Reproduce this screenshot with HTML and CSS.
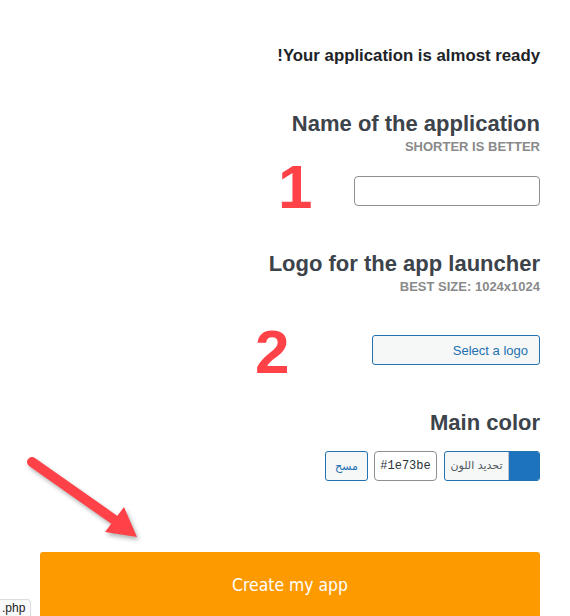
FILE: index.html
```html
<!DOCTYPE html>
<html lang="ar" dir="rtl">
<head>
    <meta charset="UTF-8">
    <meta name="viewport" content="width=device-width, initial-scale=1.0">
    <title>Create my app</title>
    <link rel="stylesheet" href="styles.css">
</head>
<body>
    <div class="wrap">
        <p class="intro" dir="rtl">Your application is almost ready!</p>

        <div class="field field-name">
            <h2 class="field-title">Name of the application</h2>
            <div class="field-hint">SHORTER IS BETTER</div>
            <input type="text" class="text-input" dir="ltr">
            <span class="step step-1">1</span>
        </div>

        <div class="field field-logo">
            <h2 class="field-title">Logo for the app launcher</h2>
            <div class="field-hint">BEST SIZE: 1024x1024</div>
            <button class="wp-button logo-btn" dir="ltr">Select a logo</button>
            <span class="step step-2">2</span>
        </div>

        <div class="field field-color">
            <h2 class="field-title">Main color</h2>
            <div class="color-row">
                <button class="color-btn">
                    <span class="swatch"></span>
                    <span class="color-label">تحديد اللون</span>
                </button>
                <input type="text" class="hex-input" value="#1e73be" dir="ltr">
                <button class="wp-button clear-btn">مسح</button>
            </div>
        </div>

        <button class="create-btn" dir="ltr">Create my app</button>
    </div>

    <!-- annotation arrow -->
    <svg class="arrow" width="130" height="100" viewBox="0 0 130 100">
        <line x1="12" y1="12" x2="96" y2="71" stroke="#ff4248" stroke-width="10" stroke-linecap="round"/>
        <polygon points="117,87 85,82 104,57" fill="#ff4248"/>
    </svg>

    <div class="status-bubble" dir="ltr">.php</div>
</body>
</html>
```

FILE: styles.css
```css
* {
    margin: 0;
    padding: 0;
    box-sizing: border-box;
}

body {
    background: #ffffff;
    font-family: 'Liberation Sans', Arial, 'DejaVu Sans', sans-serif;
    color: #3c434a;
    width: 570px;
    height: 616px;
    overflow: hidden;
}

.wrap {
    padding: 46px 30px 0 40px;
}

.intro {
    font-size: 16.8px;
    line-height: 20px;
    font-weight: bold;
    color: #1d2327;
}

.field {
    position: relative;
    margin-top: 45px;
}

.field-title {
    font-size: 22px;
    line-height: 26px;
    font-weight: bold;
    color: #3c434a;
}

.field-hint {
    margin-top: 2px;
    font-size: 13px;
    line-height: 16px;
    font-weight: bold;
    color: #8a8a8a;
}

.text-input {
    display: block;
    margin-top: 21px;
    width: 186px;
    height: 30px;
    border: 1px solid #8c8f94;
    border-radius: 4px;
    background: #fff;
}

.wp-button {
    height: 30px;
    border: 1px solid #2271b1;
    border-radius: 3px;
    background: #f6f7f7;
    color: #2271b1;
    font-family: 'Liberation Sans', Arial, 'DejaVu Sans', sans-serif;
    font-size: 13px;
}

.logo-btn {
    display: block;
    margin-top: 40px;
    width: 168px;
    padding: 0 11px;
    text-align: right;
}

.step {
    position: absolute;
    font-size: 62px;
    line-height: 62px;
    font-weight: bold;
    color: #ff4248;
}

.step-1 {
    left: 238px;
    top: 45px;
}

.step-2 {
    left: 215px;
    top: 70px;
}

.color-row {
    display: flex;
    gap: 6px;
    margin-top: 15px;
}

.color-btn {
    display: flex;
    width: 96px;
    height: 30px;
    border: 1px solid #2271b1;
    border-radius: 3px;
    background: #f6f7f7;
    overflow: hidden;
    margin-left: 1px;
}

.swatch {
    width: 31px;
    height: 100%;
    background: #1e73be;
    border-left: 1px solid #c3c4c7;
}

.color-label {
    flex: 1;
    line-height: 28px;
    text-align: center;
    font-family: 'DejaVu Sans', sans-serif;
    font-size: 11px;
    color: #50575e;
}

.hex-input {
    width: 63px;
    height: 30px;
    border: 1px solid #8c8f94;
    border-radius: 4px;
    background: #fff;
    font-family: 'Liberation Mono', 'DejaVu Sans Mono', monospace;
    font-size: 12px;
    color: #2c3338;
    text-align: center;
}

.clear-btn {
    width: 43px;
    font-family: 'DejaVu Sans', sans-serif;
    font-size: 11px;
}

.create-btn {
    display: block;
    margin-top: 71px;
    width: 500px;
    padding: 22px 0;
    border: none;
    border-radius: 3px 3px 0 0;
    background: #fd9a00;
    color: #ffffff;
    font-family: 'DejaVu Sans', sans-serif;
    font-stretch: condensed;
    font-size: 17.4px;
    line-height: 22px;
}

.arrow {
    position: absolute;
    left: 20px;
    top: 450px;
    filter: drop-shadow(2px 3px 2px rgba(0, 0, 0, 0.3));
}

.status-bubble {
    position: fixed;
    left: 0;
    bottom: 0;
    width: 31px;
    height: 17px;
    padding-left: 2px;
    background: #f8f9fa;
    border: 1px solid #dadce0;
    border-left: none;
    border-bottom: none;
    border-radius: 0 4px 0 0;
    font-family: 'Liberation Sans', Arial, sans-serif;
    font-size: 12px;
    line-height: 16px;
    color: #202124;
    white-space: nowrap;
}
```
